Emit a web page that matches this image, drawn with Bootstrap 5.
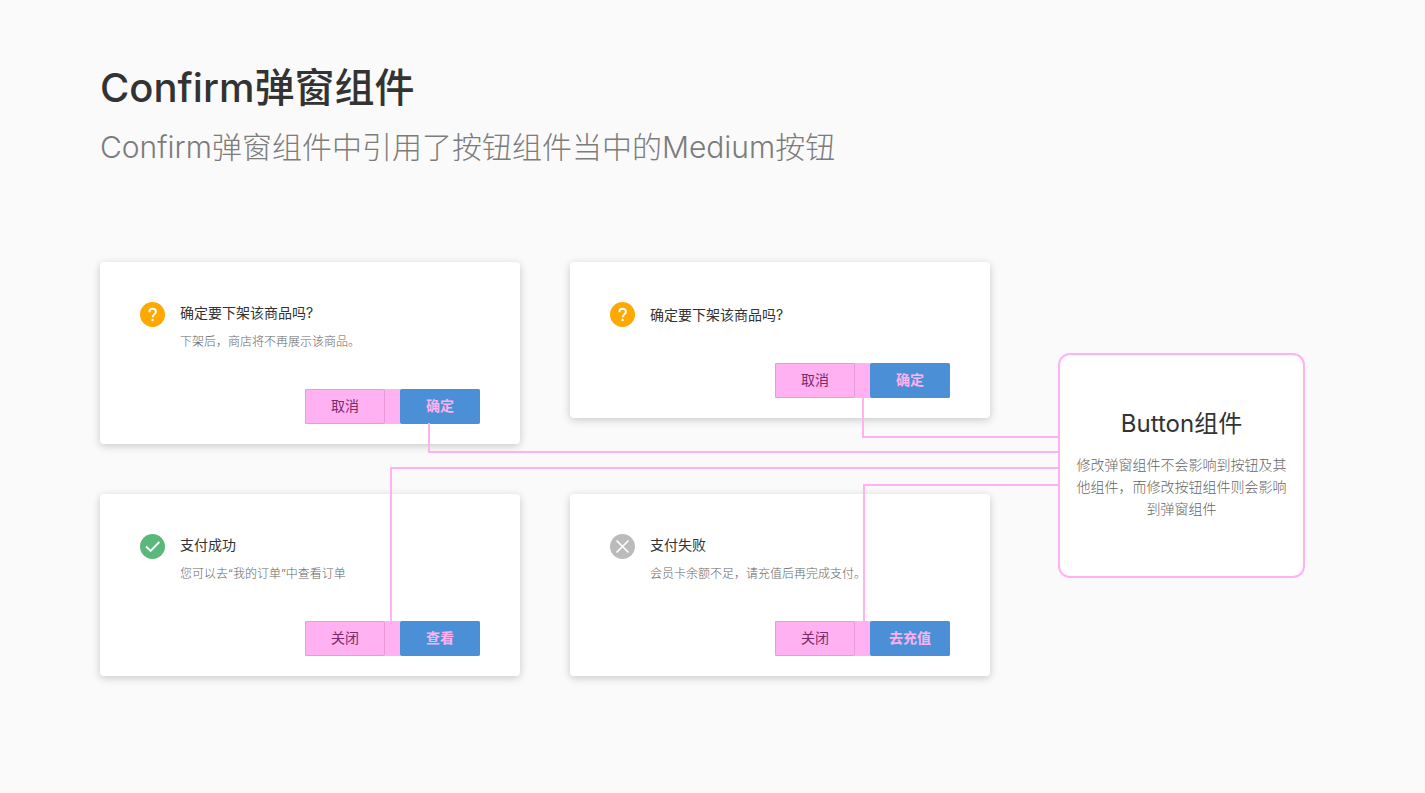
<!DOCTYPE html>
<html lang="zh-CN">
<head>
<meta charset="utf-8">
<meta name="viewport" content="width=device-width, initial-scale=1">
<title>Confirm弹窗组件</title>
<link href="https://cdn.jsdelivr.net/npm/bootstrap@5.3.0/dist/css/bootstrap.min.css" rel="stylesheet">
<style>
  :root { --pink: #ffb1f1; --blue: #4b8fd6; --ink: #333; --muted-ink: #7c7c7c; }
  body { background: #fafafa; color: var(--ink); font-family: Inter, "Noto Sans CJK SC", sans-serif; font-size: 14px; line-height: 22px; }
  .page { padding: 60px 120px 60px 100px; }
  .page-title { font-size: 40px; font-weight: 500; line-height: 56px; margin-bottom: 9px; }
  .page-intro { font-size: 30px; font-weight: 300; line-height: 44px; color: var(--muted-ink); margin-bottom: 93px; }

  .board { gap: 68px; }
  .dialogs { display: grid; grid-template-columns: 1fr 1fr; gap: 50px; align-items: start; }
  .dialog-card { background: #fff; border-radius: 4px; padding: 40px 40px 20px; box-shadow: 0 2px 8px rgba(0, 0, 0, .2); }
  .dialog-head { gap: 15px; min-height: 25px; }
  .dialog-title { font-size: 14px; font-weight: 400; line-height: 22px; margin: 0; }
  .dialog-text { font-size: 12px; font-weight: 300; line-height: 22px; color: #666; margin: 7px 0 0; }
  .status-icon { width: 25px; height: 25px; }
  .dialog-actions { margin-top: 36px; }
  .action-group { background: var(--pink); gap: 15px; }
  .action-btn { width: 80px; height: 35px; padding: 0 0 2px; border-radius: 2px; font-size: 14px; line-height: 20px; }
  .action-btn.plain, .action-btn.plain:hover { background: var(--pink); border-color: #e79cd9; color: #7b2a6c; }
  .action-btn.filled, .action-btn.filled:hover { background: var(--blue); border-color: var(--blue); color: var(--pink); font-weight: 600; }

  .callout-box { width: 247px; min-height: 225px; margin-top: 91px; padding: 0 16px 4px; gap: 14px; background: #fff; border: 2px solid var(--pink); border-radius: 12px; }
  .callout-title { font-size: 24px; font-weight: 400; line-height: 32px; margin: 0; }
  .callout-text { font-weight: 300; color: #666; margin: 0; }

  /* Connector lines run from a dialog's buttons to the callout across the 68px gutter. */
  .wire { position: absolute; right: -68px; border: 0 solid var(--pink); border-left-width: 2px; pointer-events: none; }
  .wire-down { border-bottom-width: 2px; }
  .wire-up { border-top-width: 2px; }
  .wire-a { left: calc(100% - 128px); top: 136px; height: 40px; }
  .wire-b { left: calc(50% - 117px); top: 161px; height: 30px; }
  .wire-c { left: calc(50% - 155px); top: 205px; height: 154px; }
  .wire-d { left: calc(100% - 127px); top: 222px; height: 137px; }
</style>
</head>
<body>
<main class="page container-fluid">
  <h1 class="page-title">Confirm弹窗组件</h1>
  <p class="page-intro">Confirm弹窗组件中引用了按钮组件当中的Medium按钮</p>

  <div class="board d-flex align-items-start">
    <div class="dialogs flex-grow-1 position-relative">
      <section class="dialog-card">
        <div class="dialog-head d-flex">
          <svg class="status-icon flex-shrink-0" viewBox="0 0 25 25" aria-hidden="true"><circle cx="12.500" cy="12.500" r="12.500" fill="#ffa900"/><path d="M9.300 10.200C9.300 8 10.700 6.800 12.600 6.800s3.300 1.200 3.300 3c0 2.500-3.200 2.500-3.200 5.400" fill="none" stroke="#fff" stroke-width="1.900"/><circle cx="12.600" cy="17.900" r="1.250" fill="#fff"/></svg>
          <div>
            <h2 class="dialog-title">确定要下架该商品吗?</h2>
            <p class="dialog-text">下架后，商店将不再展示该商品。</p>
          </div>
        </div>
        <div class="dialog-actions d-flex justify-content-end">
          <div class="action-group d-flex">
            <button type="button" class="btn action-btn plain">取消</button>
            <button type="button" class="btn action-btn filled">确定</button>
          </div>
        </div>
      </section>

      <section class="dialog-card">
        <div class="dialog-head d-flex align-items-center">
          <svg class="status-icon flex-shrink-0" viewBox="0 0 25 25" aria-hidden="true"><circle cx="12.500" cy="12.500" r="12.500" fill="#ffa900"/><path d="M9.300 10.200C9.300 8 10.700 6.800 12.600 6.800s3.300 1.200 3.300 3c0 2.500-3.200 2.500-3.200 5.400" fill="none" stroke="#fff" stroke-width="1.900"/><circle cx="12.600" cy="17.900" r="1.250" fill="#fff"/></svg>
          <h2 class="dialog-title">确定要下架该商品吗?</h2>
        </div>
        <div class="dialog-actions d-flex justify-content-end">
          <div class="action-group d-flex">
            <button type="button" class="btn action-btn plain">取消</button>
            <button type="button" class="btn action-btn filled">确定</button>
          </div>
        </div>
      </section>

      <section class="dialog-card">
        <div class="dialog-head d-flex">
          <svg class="status-icon flex-shrink-0" viewBox="0 0 25 25" aria-hidden="true"><circle cx="12.500" cy="12.500" r="12.500" fill="#59b87a"/><path d="M6 12.500l4.600 4.400L19.300 8" fill="none" stroke="#fff" stroke-width="1.900"/></svg>
          <div>
            <h2 class="dialog-title">支付成功</h2>
            <p class="dialog-text">您可以去“我的订单”中查看订单</p>
          </div>
        </div>
        <div class="dialog-actions d-flex justify-content-end">
          <div class="action-group d-flex">
            <button type="button" class="btn action-btn plain">关闭</button>
            <button type="button" class="btn action-btn filled">查看</button>
          </div>
        </div>
      </section>

      <section class="dialog-card">
        <div class="dialog-head d-flex">
          <svg class="status-icon flex-shrink-0" viewBox="0 0 25 25" aria-hidden="true"><circle cx="12.500" cy="12.500" r="12.500" fill="#bbb"/><path d="M6.500 6.500l12 12M18.500 6.500L6.500 18.500" fill="none" stroke="#fff" stroke-width="1.600"/></svg>
          <div>
            <h2 class="dialog-title">支付失败</h2>
            <p class="dialog-text">会员卡余额不足，请充值后再完成支付。</p>
          </div>
        </div>
        <div class="dialog-actions d-flex justify-content-end">
          <div class="action-group d-flex">
            <button type="button" class="btn action-btn plain">关闭</button>
            <button type="button" class="btn action-btn filled">去充值</button>
          </div>
        </div>
      </section>

      <div class="wire wire-down wire-a"></div>
      <div class="wire wire-down wire-b"></div>
      <div class="wire wire-up wire-c"></div>
      <div class="wire wire-up wire-d"></div>
    </div>

    <aside class="callout-box flex-shrink-0 d-flex flex-column justify-content-center text-center">
      <h2 class="callout-title">Button组件</h2>
      <p class="callout-text">修改弹窗组件不会影响到按钮及其他组件，而修改按钮组件则会影响到弹窗组件</p>
    </aside>
  </div>
</main>
<script src="https://cdn.jsdelivr.net/npm/bootstrap@5.3.0/dist/js/bootstrap.bundle.min.js"></script>
</body>
</html>
